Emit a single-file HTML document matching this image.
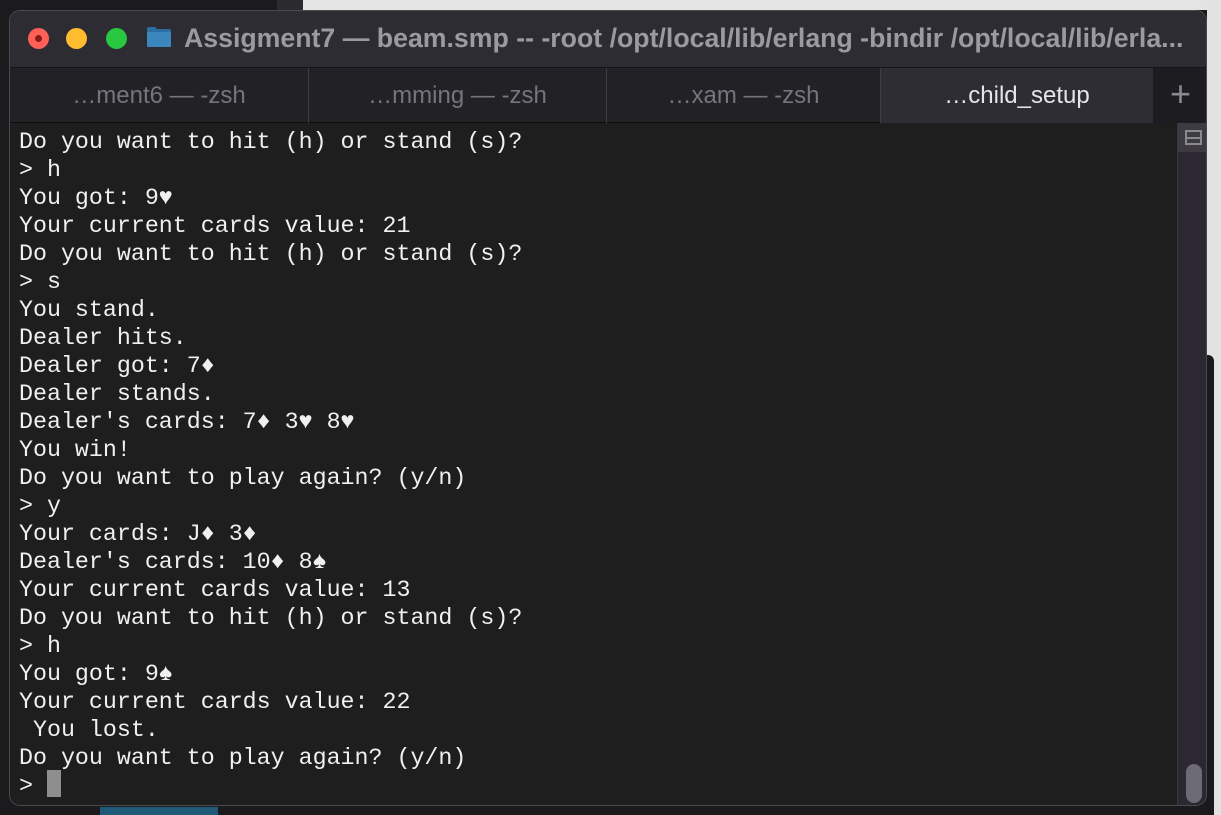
<!DOCTYPE html>
<html><head><meta charset="utf-8"><style>
html,body{margin:0;padding:0;width:1221px;height:815px;overflow:hidden;background:#1b1b1d;position:relative;font-family:"Liberation Sans",sans-serif}
.bgtop{position:absolute;left:303px;top:0;width:918px;height:10px;background:#e4e4e4}
.bgstrip{position:absolute;left:277px;top:0;width:26px;height:10px;background:#2b2b2e}
.bgright{position:absolute;left:1207px;top:0;width:14px;height:815px;background:#e2e2e2}
.bgright2{position:absolute;left:1207px;top:355px;width:7px;height:460px;background:#19191b;border-radius:0 6px 0 0}
.blue{position:absolute;left:100px;top:807px;width:118px;height:8px;background:#1f5a78}
.win{position:absolute;left:9px;top:10px;width:1198px;height:796px;border-radius:11px;background:#1e1e1e;overflow:hidden;border:1px solid #4a4a4e;box-sizing:border-box}
.title{position:absolute;left:0;top:0;width:100%;height:56px;background:#2e2c33}
.dot{position:absolute;top:17px;width:21px;height:21px;border-radius:50%}
.ttext{position:absolute;left:174px;top:12px;font-size:26.7px;font-weight:bold;color:#9c9aa0;white-space:nowrap}
.folder{position:absolute;left:136px;top:15px;width:26px;height:22px}
.tabs{position:absolute;left:0;top:56px;width:100%;height:56px;background:#222126;border-top:1px solid #141416;border-bottom:1px solid #0e0e0e;box-sizing:border-box}
.tab{position:absolute;top:0;height:55px;line-height:55px;text-align:center;font-size:24px;color:#77757b;border-right:1px solid #3e3d42;box-sizing:border-box}
.tab.act{background:#2f2d34;color:#e6e4ea;border-right:none}
.plus{position:absolute;left:1143px;top:0;width:55px;height:55px;background:#1d1c20;color:#8b898f;font-size:36px;text-align:center;line-height:52px;font-weight:200}
pre{position:absolute;left:9px;top:117px;margin:0;font-family:"Liberation Mono","DejaVu Sans Mono",monospace;font-size:23.3px;line-height:28px;color:#f0f0f0}
.sb{position:absolute;left:1167px;top:112px;width:30px;height:684px;background:#2c2833;border-left:1px solid #3a3640}
.sbtop{position:absolute;left:0;top:0;width:30px;height:29px;background:#3d3a42}
.sbicon{position:absolute;left:7px;top:7px;width:17px;height:15px;border:2px solid #8a8890;box-sizing:border-box}
.sbicon:after{content:"";position:absolute;left:0;top:4.5px;width:13px;height:2px;background:#8a8890}
.thumb{position:absolute;left:8px;top:641px;width:16px;height:39px;border-radius:8px;background:#6c6a72}
.cur{display:inline-block;width:14px;height:27px;background:#8e8e8e;vertical-align:top;margin-top:-2px}
</style></head><body>
<div class="bgstrip"></div><div class="bgtop"></div><div class="bgright"></div><div class="bgright2"></div><div class="blue"></div>
<div class="win">
 <div class="title">
  <div class="dot" style="left:18px;background:#fe5f57"><div style="position:absolute;left:7px;top:7px;width:7px;height:7px;border-radius:50%;background:#8c1a13"></div></div>
  <div class="dot" style="left:56px;background:#febc2e"></div>
  <div class="dot" style="left:96px;background:#28c840"></div>
  <svg class="folder" viewBox="0 0 26 22"><path d="M1 3 Q1 1 3 1 L9 1 L11 3 L23 3 Q25 3 25 5 L25 20 Q25 21 24 21 L2 21 Q1 21 1 20 Z" fill="#2a6fa0"/><rect x="1" y="6" width="24" height="15" rx="1" fill="#3a86bd"/></svg>
  <div class="ttext">Assigment7 — beam.smp -- -root /opt/local/lib/erlang -bindir /opt/local/lib/erla...</div>
 </div>
 <div class="tabs">
  <div class="tab" style="left:0;width:299px">…ment6 — -zsh</div>
  <div class="tab" style="left:299px;width:298px">…mming — -zsh</div>
  <div class="tab" style="left:597px;width:274px">…xam — -zsh</div>
  <div class="tab act" style="left:871px;width:272px">…child_setup</div>
  <div class="plus">+</div>
 </div>
 <pre>Do you want to hit (h) or stand (s)?
&gt; h
You got: 9♥
Your current cards value: 21
Do you want to hit (h) or stand (s)?
&gt; s
You stand.
Dealer hits.
Dealer got: 7♦
Dealer stands.
Dealer's cards: 7♦ 3♥ 8♥
You win!
Do you want to play again? (y/n)
&gt; y
Your cards: J♦ 3♦
Dealer's cards: 10♦ 8♠
Your current cards value: 13
Do you want to hit (h) or stand (s)?
&gt; h
You got: 9♠
Your current cards value: 22
 You lost.
Do you want to play again? (y/n)
&gt; <span class="cur"></span></pre>
 <div class="sb"><div class="sbtop"><div class="sbicon"></div></div><div class="thumb"></div></div>
</div>
</body></html>
